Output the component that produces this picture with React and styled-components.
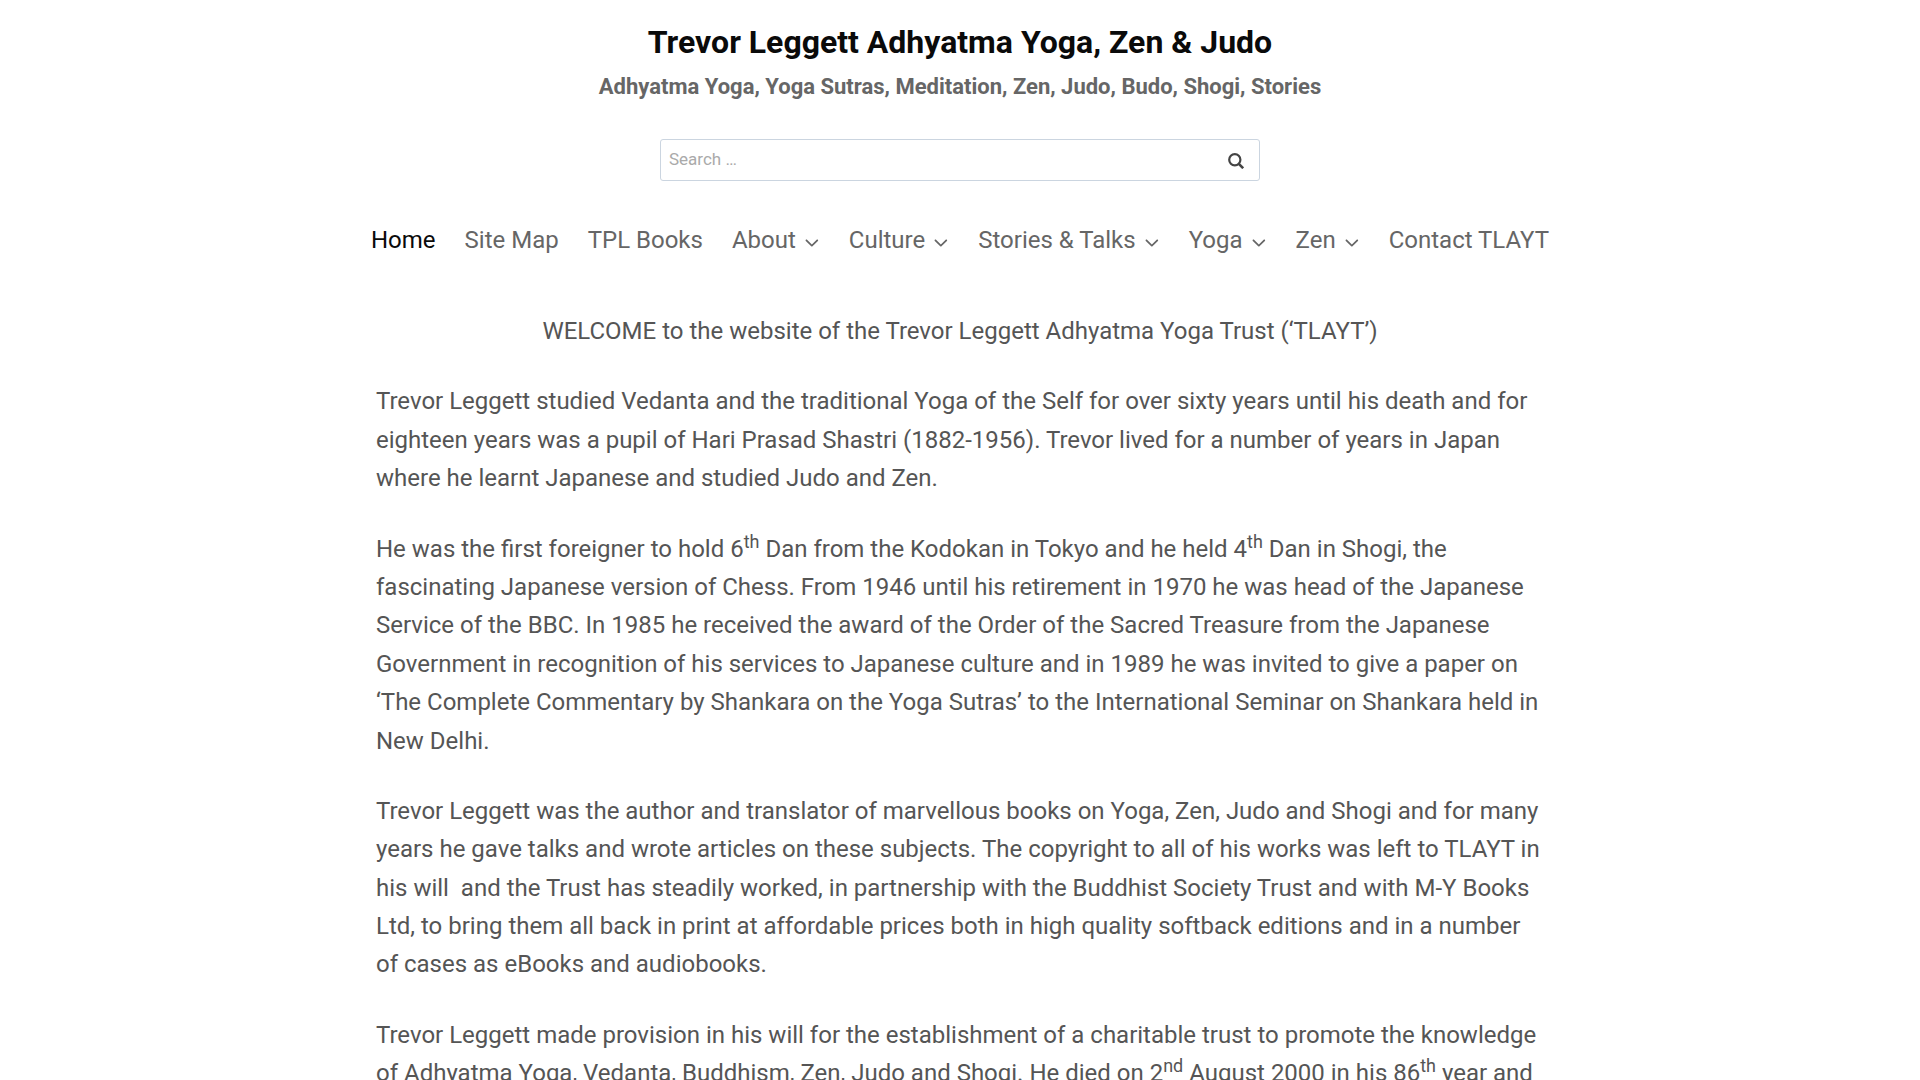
import React from 'react'
import styled, { createGlobalStyle } from 'styled-components'

const GlobalStyle = createGlobalStyle`
*{
box-sizing:border-box;
}
body{
margin:0;
background-color:#ffffff;
color:#555555;
font-family:Roboto, "Liberation Sans", sans-serif;
font-size:24px;
line-height:1.6;
}
`
const Header = styled.header`
display:flex;
flex-direction:column;
align-items:center;
padding:23px 24px 0;
`
const Title = styled.a`
color:#0a0a0a;
font-size:32px;
font-weight:700;
line-height:38px;
text-decoration:none;
`
const Tagline = styled.p`
margin:10px 0 0;
color:#666666;
font-size:22px;
font-weight:700;
line-height:32px;
text-align:center;
`
const SearchForm = styled.form`
display:flex;
width:100%;
max-width:600px;
height:42px;
margin-top:36px;
border:1px solid #cbd5e0;
border-radius:3px;
background-color:#ffffff;
`
const SearchInput = styled.input`
flex:1;
min-width:0;
padding:0 8px 2px;
border:0;
outline:0;
background:transparent;
color:#555555;
font-family:inherit;
font-size:17px;

&::placeholder{
color:#aaaaaa;
opacity:1;
}
`
const SearchButton = styled.button`
display:flex;
align-items:center;
justify-content:center;
width:46px;
padding:2px 0 0;
border:0;
background:transparent;
color:#444444;
cursor:pointer;
`
const Nav = styled.nav`
margin-top:40px;
`
const Menu = styled.ul`
display:flex;
flex-wrap:wrap;
justify-content:center;
gap:0 29px;
margin:0;
padding:0;
list-style:none;
`
const MenuLink = styled.a`
display:flex;
align-items:center;
gap:5px;
color:${(props) => (props.$active ? '#0a0a0a' : '#666666')};
line-height:38px;
text-decoration:none;
white-space:nowrap;

&:hover{
color:#0a0a0a;
}
`
const Chevron = styled.svg`
width:19px;
height:22px;
margin-top:6px;
`
const Content = styled.main`
max-width:1216px;
margin:0 auto;
padding:53px 24px 0;
`
const Paragraph = styled.p`
margin:0 0 32px;
text-align:${(props) => (props.$center ? 'center' : 'left')};
`
const Sup = styled.sup`
position:relative;
top:-9px;
font-size:18px;
line-height:0;
vertical-align:baseline;
`

const menuItems = [
  { label: 'Home', active: true },
  { label: 'Site Map' },
  { label: 'TPL Books' },
  { label: 'About', sub: true },
  { label: 'Culture', sub: true },
  { label: 'Stories & Talks', sub: true },
  { label: 'Yoga', sub: true },
  { label: 'Zen', sub: true },
  { label: 'Contact TLAYT' },
]

const ArrowDown = () => (
  <Chevron viewBox="0 0 21 24" fill="currentColor" aria-hidden="true">
    <path d="M5.293 9.707l6 6c0.391 0.391 1.024 0.391 1.414 0l6-6c0.391-0.391 0.391-1.024 0-1.414s-1.024-0.391-1.414 0l-5.293 5.293-5.293-5.293c-0.391-0.391-1.024-0.391-1.414 0s-0.391 1.024 0 1.414z" />
  </Chevron>
)

const SearchIcon = () => (
  <svg width="16" height="16" viewBox="0 0 16 16" fill="none" stroke="currentColor" aria-hidden="true">
    <circle cx="6.8" cy="6.8" r="5.6" strokeWidth="2.2" />
    <path d="M10.8 10.8l4.4 4.4" strokeWidth="2.6" />
  </svg>
)

const App = () => {
  return (
    <>
      <GlobalStyle />
      <Header>
        <Title href="#">Trevor Leggett Adhyatma Yoga, Zen &amp; Judo</Title>
        <Tagline>Adhyatma Yoga, Yoga Sutras, Meditation, Zen, Judo, Budo, Shogi, Stories</Tagline>
        <SearchForm role="search" onSubmit={(e) => e.preventDefault()}>
          <SearchInput type="search" placeholder="Search …" aria-label="Search" />
          <SearchButton type="submit" aria-label="Search">
            <SearchIcon />
          </SearchButton>
        </SearchForm>
        <Nav aria-label="Primary">
          <Menu>
            {menuItems.map((item) => (
              <li key={item.label}>
                <MenuLink href="#" $active={item.active}>
                  {item.label}
                  {item.sub && <ArrowDown />}
                </MenuLink>
              </li>
            ))}
          </Menu>
        </Nav>
      </Header>
      <Content>
        <Paragraph $center>
          WELCOME to the website of the Trevor Leggett Adhyatma Yoga Trust (‘TLAYT’)
        </Paragraph>
        <Paragraph>
          Trevor Leggett studied Vedanta and the traditional Yoga of the Self for over sixty years
          until his death and for eighteen years was a pupil of Hari Prasad Shastri (1882-1956).
          Trevor lived for a number of years in Japan where he learnt Japanese and studied Judo and
          Zen.
        </Paragraph>
        <Paragraph>
          He was the first foreigner to hold 6<Sup>th</Sup> Dan from the Kodokan in Tokyo and he
          held 4<Sup>th</Sup> Dan in Shogi, the fascinating Japanese version of Chess. From 1946
          until his retirement in 1970 he was head of the Japanese Service of the BBC. In 1985 he
          received the award of the Order of the Sacred Treasure from the Japanese Government in
          recognition of his services to Japanese culture and in 1989 he was invited to give a paper
          on ‘The Complete Commentary by Shankara on the Yoga Sutras’ to the International Seminar
          on Shankara held in New Delhi.
        </Paragraph>
        <Paragraph>
          Trevor Leggett was the author and translator of marvellous books on Yoga, Zen, Judo and
          Shogi and for many years he gave talks and wrote articles on these subjects. The copyright
          to all of his works was left to TLAYT in his will&nbsp; and the Trust has steadily worked,
          in partnership with the Buddhist Society Trust and with M-Y Books Ltd, to bring them all
          back in print at affordable prices both in high quality softback editions and in a number
          of cases as eBooks and audiobooks.
        </Paragraph>
        <Paragraph>
          Trevor Leggett made provision in his will for the establishment of a charitable trust to
          promote the knowledge of Adhyatma Yoga, Vedanta, Buddhism, Zen, Judo and Shogi. He died on
          2<Sup>nd</Sup> August 2000 in his 86<Sup>th</Sup> year and
        </Paragraph>
      </Content>
    </>
  )
}

export default App
